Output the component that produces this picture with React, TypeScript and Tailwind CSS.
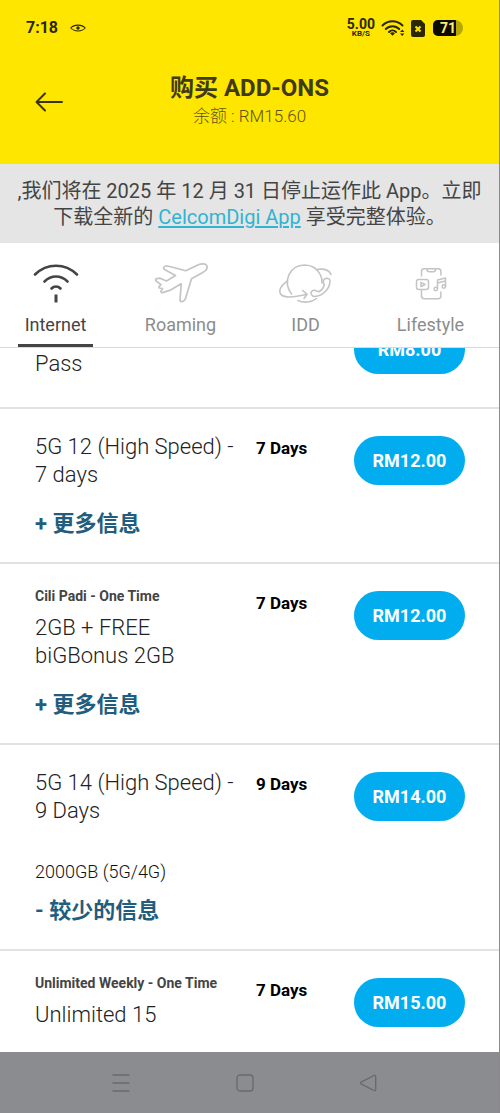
import type { ReactNode } from "react";

type Plan = {
  id: string;
  label?: string;
  title: string;
  days?: string;
  price: string;
  detail?: string;
  toggle?: string;
  sign?: string;
};

const plans: Plan[] = [
  { id: "p8", title: "Internet High Speed Pass", price: "RM8.00" },
  { id: "p12", title: "5G 12 (High Speed) - 7 days", days: "7 Days", price: "RM12.00", sign: "+", toggle: "更多信息" },
  {
    id: "cili",
    label: "Cili Padi - One Time",
    title: "2GB + FREE biGBonus 2GB",
    days: "7 Days",
    price: "RM12.00",
    sign: "+",
    toggle: "更多信息",
  },
  {
    id: "p14",
    title: "5G 14 (High Speed) - 9 Days",
    days: "9 Days",
    price: "RM14.00",
    detail: "2000GB (5G/4G)",
    sign: "-",
    toggle: "较少的信息",
  },
  { id: "p15", label: "Unlimited Weekly - One Time", title: "Unlimited 15", days: "7 Days", price: "RM15.00" },
];

const InternetIcon = () => (
  <svg viewBox="0 0 56 44" className="h-11 w-14" fill="none" stroke="#444" strokeWidth="2.6" strokeLinecap="round" aria-hidden="true">
    <path d="M7 12.5C19 .8 37 .8 49 12.5" />
    <path d="M16.5 19.5c6.8-6.6 16.200-6.600 23 0" />
    <path d="M23.500 26.500c2.500-2.700 6.500-2.700 9 0" />
    <path d="M28 32.500v8" strokeWidth="3" strokeLinecap="butt" />
  </svg>
);

const PlaneIcon = () => (
  <svg viewBox="0 0 56 44" className="h-11 w-14" fill="none" stroke="#c4c4c4" strokeWidth="1.700" strokeLinejoin="round" strokeLinecap="round" aria-hidden="true">
    <path d="M22.500 13.500 11.500 7.500c-2-1.300-.3-3.200 1.300-3.500 1-.2 2-.1 3 .2l17 4.500 12-5.700c3-1.400 8-1.700 9 .6 1 2.600-1 5.200-4 6.800L38.500 16.800 32.500 36.500c-.7 2.400-5.200 5-5.500 1.500l1.200-16.200-11.500 6.600-7.200 2.200c-1.200.3-1.900-.8-1.300-1.800l1.400-2.200-3-.6c-.8-.2-.9-1.100-.3-1.700l1.700-1.700-4.600-3.300c-1.300-1-1-2.300.4-2.600l3.200-.5 6.500 2.800Z" />
  </svg>
);

const GlobeIcon = () => (
  <svg viewBox="0 0 56 44" className="h-11 w-14" fill="none" stroke="#c4c4c4" strokeWidth="1.600" strokeLinejoin="round" strokeLinecap="round" aria-hidden="true">
    <path d="M13.500 32C4.500 20 11 3.500 26.500 3c7 0 13 4 16 10 1.300 3 1.800 6 1.500 8" />
    <path d="M20 38.500c6 2.800 13.500 2 18.500-2" />
    <path d="M9.500 19C2 24 0 29.500 3.500 33c4.500 3.500 14 2 24.500-.5" />
    <path d="m24.500 28.500 4.500 3.700-3 4.300" />
    <path d="M38.500 7.500c7-1 12.500 0 14.500 5" />
    <path d="M46.500 17c1.500-1.300 5.500-.5 5.500 1.500 0 8-6.500 15.500-15.500 16-2.500.2-4.500-3.500-3-5 1.500-1.300 4-1.300 5.500-.3l1.800.6c3-1.500 4.800-4 5.500-7l-.8-1.600c-.5-1.500-.2-3.200 1-4.200Z" />
  </svg>
);

const LifestyleIcon = () => (
  <svg viewBox="0 0 56 44" className="h-11 w-14" fill="none" stroke="#c4c4c4" strokeWidth="1.500" strokeLinejoin="round" strokeLinecap="round" aria-hidden="true">
    <path d="M18.500 14V9.500c0-1.700 1-2.700 2.700-2.700h14c1.700 0 2.700 1 2.700 2.700V13M18.500 28.500V34c0 1.700 1 2.700 2.700 2.700h14c1.700 0 2.700-1 2.700-2.700v-4" />
    <path d="M24 7c0 2 .8 2.800 2.300 2.800h4c1.500 0 2.300-.8 2.300-2.800" />
    <rect x="13.500" y="17.500" width="12" height="10" rx="2.200" />
    <path d="m18 20.300 4 2.200-4 2.200Z" />
    <path d="M34.500 27V18l8-2v8.500M34.500 21l8-2" />
    <circle cx="32.800" cy="27" r="1.700" />
    <circle cx="40.800" cy="24.500" r="1.700" />
  </svg>
);

const tabs: { name: string; icon: ReactNode }[] = [
  { name: "Internet", icon: <InternetIcon /> },
  { name: "Roaming", icon: <PlaneIcon /> },
  { name: "IDD", icon: <GlobeIcon /> },
  { name: "Lifestyle", icon: <LifestyleIcon /> },
];

function StatusBar() {
  return (
    <div className="flex h-14 items-center justify-between pr-9 pl-[26px] text-[#2b2700]">
      <div className="flex items-center gap-3">
        <span className="text-[16px] leading-6 font-bold">7:18</span>
        <svg viewBox="0 0 16 8" className="h-2 w-4" fill="none" stroke="currentColor" strokeWidth="1.100" aria-hidden="true">
          <path d="M.8 4C4 .1 12 .1 15.200 4 12 7.900 4 7.900.8 4Z" />
          <circle cx="8" cy="4" r="1.700" fill="currentColor" stroke="none" />
        </svg>
      </div>
      <div className="flex items-center gap-[6px]">
        <div className="flex flex-col items-center font-bold">
          <span className="text-[14px] leading-[11px]">5.00</span>
          <span className="text-[8px] leading-[8px]">KB/S</span>
        </div>
        <svg viewBox="0 0 24 18" className="h-[18px] w-6" fill="none" stroke="currentColor" strokeWidth="2" strokeLinecap="round" aria-hidden="true">
          <path d="M1.500 6.500c5.500-5.600 14.500-5.600 20 0M4.800 10c3.700-3.800 9.700-3.800 13.400 0M8 13c2-2 5-2 7 0" />
          <path d="m9 14.200 2.500 2.600 2.500-2.600c-1.500-1.200-3.500-1.200-5 0Z" fill="currentColor" stroke="none" />
          <path d="m19 13 2.200-2.500 2.200 2.500ZM19 14.500l2.200 2.500 2.200-2.500Z" fill="currentColor" stroke="none" />
        </svg>
        <svg viewBox="0 0 14 17" className="h-[17px] w-[14px]" aria-hidden="true">
          <path d="M2 0h8l4 4v11a2 2 0 0 1-2 2H2a2 2 0 0 1-2-2V2a2 2 0 0 1 2-2Z" fill="currentColor" />
          <path d="m4.500 6.500 5 5m0-5-5 5" stroke="#ffe600" strokeWidth="2" />
        </svg>
        <div className="ml-[2px] flex h-4 w-[30px] overflow-hidden rounded-l-[5px] rounded-r-lg bg-[#b5a800]">
          <span className="w-[23px] bg-[#0d0c00] text-right text-[14px] leading-4 font-bold text-[#ffee6b]">71</span>
        </div>
      </div>
    </div>
  );
}

function PlanRow({ plan }: { plan: Plan }) {
  return (
    <li className="flex min-h-[111px] shrink-0 items-start border-b-2 border-[#e2e2e2] pr-[34px] pl-[35px]">
      <div className="min-w-0 flex-1 pt-6 pb-6">
        {plan.label && <p className="mb-[10px] text-[14px] leading-4 font-bold whitespace-nowrap text-[#444]">{plan.label}</p>}
        <h2 className="max-w-[210px] text-[22px] leading-7 font-light text-[#222]">{plan.title}</h2>
        {plan.detail && <p className="mt-[35px] -mb-2 text-[18px] leading-6 font-light text-[#111]">{plan.detail}</p>}
        {plan.toggle && (
          <button type="button" className="mt-[21px] block text-[22px] leading-7 font-bold text-[#225d7d]">
            {plan.sign} {plan.toggle}
          </button>
        )}
      </div>
      <p className="w-[98px] shrink-0 pt-[27px] text-[17px] leading-6 font-bold text-black">{plan.days}</p>
      <div className="shrink-0 pt-[27px]">
        <button type="button" className="h-[49px] w-[111px] rounded-full bg-[#02adef] text-[18px] leading-6 font-bold text-white">
          {plan.price}
        </button>
      </div>
    </li>
  );
}

export default function App() {
  return (
    <div className="flex h-screen flex-col overflow-hidden border-r border-[#8a8a8a] bg-white font-[Roboto,'Noto_Sans_CJK_SC',sans-serif]">
      <header className="shrink-0 bg-[#ffe600] pb-[34px]">
        <StatusBar />
        <div className="grid grid-cols-[64px_1fr_64px] items-center pt-[18px]">
          <button type="button" aria-label="Back" className="flex justify-end pr-px">
            <svg viewBox="0 0 28 20" className="h-5 w-7" fill="none" stroke="#3a3400" strokeWidth="2" strokeLinecap="round" strokeLinejoin="round" aria-hidden="true">
              <path d="M27 10H1.500M10 1.500 1.500 10l8.500 8.500" />
            </svg>
          </button>
          <div className="text-center">
            <h1 className="text-[24px] leading-7 font-bold text-[#3f3a17]">购买 ADD-ONS</h1>
            <p className="text-[17px] leading-7 font-light text-[#5c5414]">余额 : RM15.60</p>
          </div>
        </div>
      </header>

      <p className="shrink-0 bg-[#e5e5e5] pt-[14px] pb-[13px] text-center text-[20px] leading-[26px] text-[#444]">
        ,我们将在 2025 年 12 月 31 日停止运作此 App。立即
        <br />
        下载全新的{" "}
        <a href="#app" className="text-[#2fb4d3] underline underline-offset-2">
          CelcomDigi App
        </a>{" "}
        享受完整体验。
      </p>

      <nav className="flex shrink-0 justify-between border-b border-[#d9d9d9] pr-[31px] pl-[18px]">
        {tabs.map((tab, i) => (
          <button
            type="button"
            key={tab.name}
            className={
              i === 0
                ? "flex w-[75px] flex-col items-center border-b-3 border-[#444] pt-[19px] text-[#444]"
                : "flex w-[75px] flex-col items-center border-b-3 border-transparent pt-[19px] text-[#8c8c8c]"
            }
          >
            {tab.icon}
            <span className="py-[7px] text-[18px] leading-6">{tab.name}</span>
          </button>
        ))}
      </nav>

      <main className="min-h-0 flex-1 overflow-hidden">
        <ul className="-mt-[50px] flex flex-col">
          {plans.map((plan) => (
            <PlanRow key={plan.id} plan={plan} />
          ))}
        </ul>
      </main>

      <footer className="flex h-[61px] shrink-0 items-center justify-between bg-[#8b8c90] pr-[122px] pl-28 text-[#68696d]">
        <button type="button" aria-label="Recent apps">
          <svg viewBox="0 0 18 18" className="size-[18px]" fill="none" stroke="currentColor" strokeWidth="1.300" aria-hidden="true">
            <path d="M.5 1h17M.5 9h17M.5 17h17" />
          </svg>
        </button>
        <button type="button" aria-label="Home">
          <svg viewBox="0 0 18 18" className="size-[18px]" fill="none" stroke="currentColor" strokeWidth="1.300" aria-hidden="true">
            <rect x="1" y="1" width="16" height="16" rx="3" />
          </svg>
        </button>
        <button type="button" aria-label="Back to previous screen">
          <svg viewBox="0 0 18 18" className="size-[18px]" fill="none" stroke="currentColor" strokeWidth="1.300" strokeLinejoin="round" aria-hidden="true">
            <path d="M15 1.500 2 8.200c-.7.400-.7 1.200 0 1.600l13 6.700c.9.400 1.700 0 1.700-1V2.500c0-1-.8-1.400-1.700-1Z" />
          </svg>
        </button>
      </footer>
    </div>
  );
}
